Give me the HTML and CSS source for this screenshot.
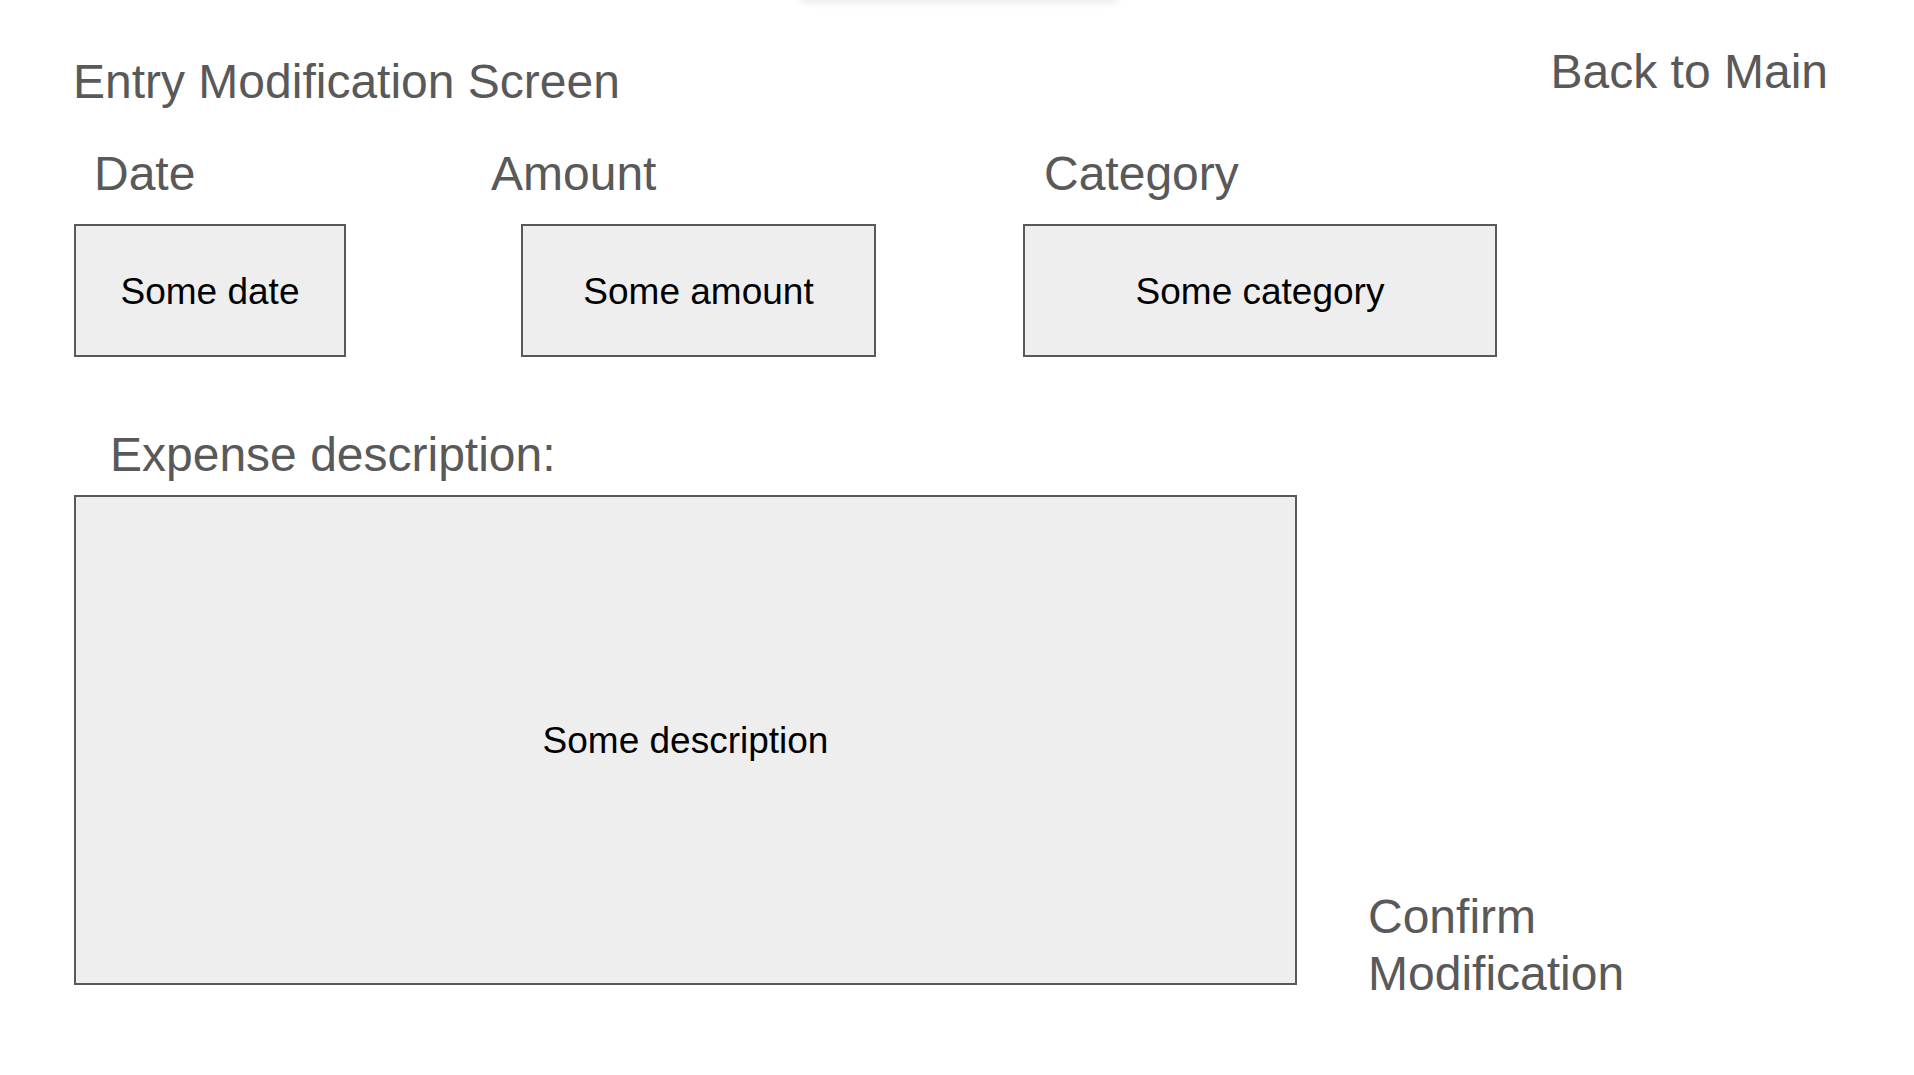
FILE: index.html
```html
<!DOCTYPE html>
<html lang="en">
<head>
<meta charset="utf-8">
<title>Entry Modification Screen</title>
<link rel="stylesheet" href="styles.css">
</head>
<body>
<div class="top-shadow"></div>
<main class="page">
  <header class="header">
    <h1 class="title">Entry Modification Screen</h1>
    <a class="back" href="#">Back to Main</a>
  </header>

  <div class="labels">
    <span class="label label-date">Date</span>
    <span class="label label-amount">Amount</span>
    <span class="label label-category">Category</span>
  </div>

  <div class="fields">
    <div class="box box-date">Some date</div>
    <div class="box box-amount">Some amount</div>
    <div class="box box-category">Some category</div>
  </div>

  <div class="label desc-label">Expense description:</div>

  <div class="desc-row">
    <div class="box box-desc">Some description</div>
    <a class="confirm" href="#">Confirm<br>Modification</a>
  </div>
</main>
</body>
</html>
```

FILE: styles.css
```css
html, body {
  margin: 0;
  padding: 0;
  background: #ffffff;
}

body {
  font-family: "Liberation Sans", Arial, sans-serif;
  color: #595959;
  width: 1914px;
  height: 1075px;
  overflow: hidden;
  position: relative;
}

.top-shadow {
  position: absolute;
  left: 800px;
  top: -30px;
  width: 318px;
  height: 30px;
  border-radius: 6px;
  box-shadow: 0 2px 9px rgba(0, 0, 0, 0.10);
}

.page {
  padding-top: 44px;
}

.header {
  display: flex;
  align-items: flex-start;
  justify-content: space-between;
  padding-left: 73px;
  padding-right: 86px;
}

.title {
  margin: 10px 0 0 0;
  font-size: 48px;
  font-weight: normal;
  line-height: 56px;
  color: #595959;
}

.back {
  font-size: 48px;
  line-height: 56px;
  color: #595959;
  text-decoration: none;
}

.label {
  font-size: 48px;
  line-height: 56px;
  color: #595959;
}

.labels {
  display: grid;
  grid-template-columns: 397px 553px auto;
  padding-left: 94px;
  margin-top: 36px;
}

.fields {
  display: flex;
  margin-top: 22px;
  padding-left: 74px;
}

.box {
  box-sizing: border-box;
  background: #eeeeee;
  border: 2px solid #595959;
  color: #000000;
  font-size: 37px;
  display: flex;
  align-items: center;
  justify-content: center;
  padding-top: 2px;
  height: 133px;
}

.box-date {
  width: 272px;
}

.box-amount {
  width: 355px;
  margin-left: 175px;
}

.box-category {
  width: 474px;
  margin-left: 147px;
}

.desc-label {
  margin-top: 70px;
  padding-left: 110px;
}

.desc-row {
  display: flex;
  align-items: flex-start;
  margin-top: 12px;
  padding-left: 74px;
}

.box-desc {
  width: 1223px;
  height: 490px;
}

.confirm {
  margin-top: 393px;
  margin-left: 71px;
  font-size: 48px;
  line-height: 57px;
  color: #595959;
  text-decoration: none;
}
```
